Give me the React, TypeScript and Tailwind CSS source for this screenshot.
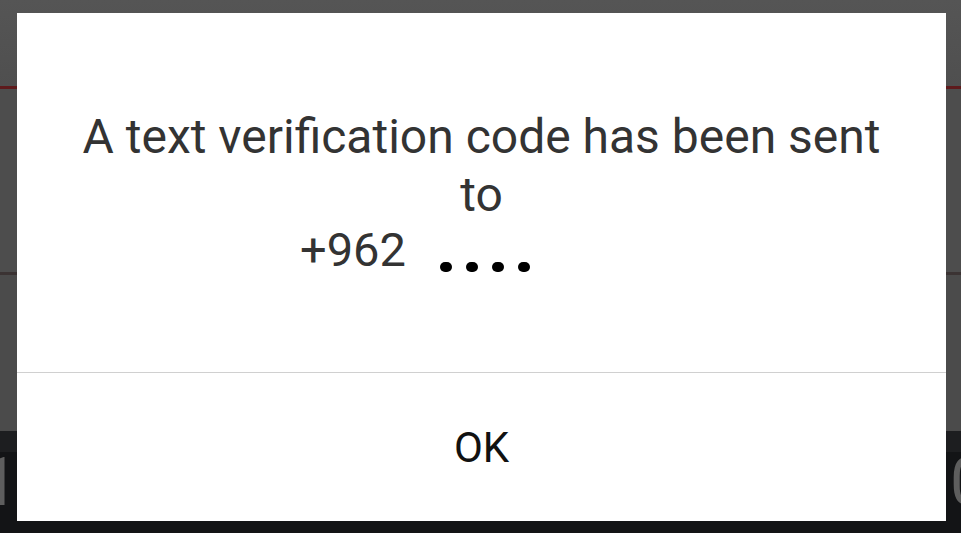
export default function App() {
  return (
    <div className="relative w-[961px] h-[533px] overflow-hidden bg-[#505050]" style={{ fontFamily: "Roboto, 'Noto Sans', sans-serif" }}>
      <div className="flex flex-col h-full">
        <div className="h-[86px] bg-gradient-to-b from-[#555] to-[#4f4f4f]" />
        <div className="h-[3px] bg-[#5e1a1c]" />
        <div className="h-[183px] bg-[#4d4d4d]" />
        <div className="h-[3px] bg-[#3b3333]" />
        <div className="h-[156px] bg-[#4b4b4b]" />
        <div className="h-[21px] bg-[#1d1e20]" />
        <div className="flex-1 bg-[#131416] flex justify-between items-start text-[#5e5e5e] text-[66px] leading-none">
          <span className="-ml-[19px] mt-[-2px]">1</span>
          <span className="-mr-[26px] mt-[-2px]">0</span>
        </div>
      </div>

      <div className="absolute left-[17px] top-[13px] w-[929px] h-[508px] bg-white flex flex-col">
        <div className="h-[359px] flex flex-col pt-[95px] text-[48px] leading-[58px] text-[#333333]">
          <div className="text-center">A text verification code has been sent</div>
          <div className="text-center">to</div>
          <div className="flex items-start pl-[283px] -mt-[3px]">
            <span className="text-[47px]">+962</span>
            <span className="flex gap-[14px] ml-[34px] mt-[41px]">
              <span className="w-[12px] h-[10px] rounded-full bg-black" />
              <span className="w-[12px] h-[10px] rounded-full bg-black" />
              <span className="w-[12px] h-[10px] rounded-full bg-black" />
              <span className="w-[12px] h-[10px] rounded-full bg-black" />
            </span>
          </div>
        </div>
        <div className="h-px bg-[#d0d0d0]" />
        <div className="flex-1 flex items-center justify-center text-[42px] text-[#111]">OK</div>
      </div>
    </div>
  );
}
